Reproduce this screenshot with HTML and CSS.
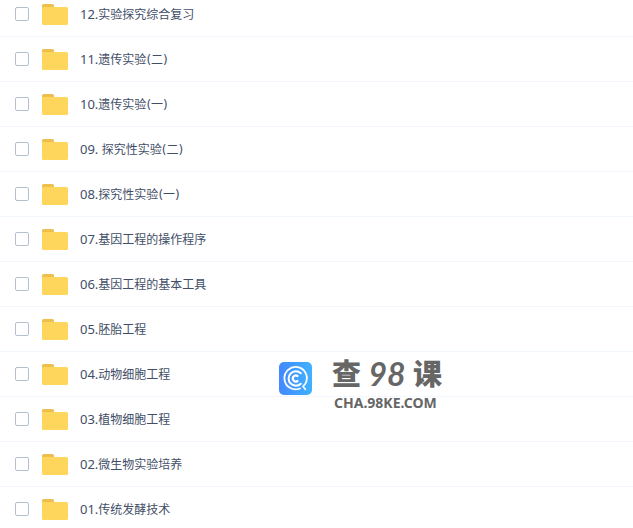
FILE: index.html
```
<!DOCTYPE html>
<html lang="zh-CN">
<head>
  <meta charset="UTF-8">
  <meta name="viewport" content="width=device-width, initial-scale=1.0">
  <title>文件列表</title>
  <link rel="stylesheet" href="styles.css">
</head>
<body>
  <!-- shared folder icon -->
  <svg class="sprite" aria-hidden="true">
    <symbol id="folder" viewBox="0 0 26 21">
      <path fill="#ecbf4e" d="M0 5V1.500Q0 0 1.500 0H10.500Q12 0 12 1.500V5Z"/>
      <path fill="#ffd65c" d="M0 3H24.500Q26 3 26 4.500V19.500Q26 21 24.500 21H1.500Q0 21 0 19.500Z"/>
    </symbol>
  </svg>

  <main class="file-panel">
    <ul class="file-list">
      <li class="file-row">
        <input type="checkbox" id="file12">
        <svg class="folder"><use href="#folder"/></svg>
        <label for="file12"><span class="num">12.</span>实验探究综合复习</label>
      </li>
      <li class="file-row">
        <input type="checkbox" id="file11">
        <svg class="folder"><use href="#folder"/></svg>
        <label for="file11"><span class="num">11.</span>遗传实验<span class="paren">(</span>二<span class="paren">)</span></label>
      </li>
      <li class="file-row">
        <input type="checkbox" id="file10">
        <svg class="folder"><use href="#folder"/></svg>
        <label for="file10"><span class="num">10.</span>遗传实验<span class="paren">(</span>一<span class="paren">)</span></label>
      </li>
      <li class="file-row">
        <input type="checkbox" id="file09">
        <svg class="folder"><use href="#folder"/></svg>
        <label for="file09"><span class="num">09. </span>探究性实验<span class="paren">(</span>二<span class="paren">)</span></label>
      </li>
      <li class="file-row">
        <input type="checkbox" id="file08">
        <svg class="folder"><use href="#folder"/></svg>
        <label for="file08"><span class="num">08.</span>探究性实验<span class="paren">(</span>一<span class="paren">)</span></label>
      </li>
      <li class="file-row">
        <input type="checkbox" id="file07">
        <svg class="folder"><use href="#folder"/></svg>
        <label for="file07"><span class="num">07.</span>基因工程的操作程序</label>
      </li>
      <li class="file-row">
        <input type="checkbox" id="file06">
        <svg class="folder"><use href="#folder"/></svg>
        <label for="file06"><span class="num">06.</span>基因工程的基本工具</label>
      </li>
      <li class="file-row">
        <input type="checkbox" id="file05">
        <svg class="folder"><use href="#folder"/></svg>
        <label for="file05"><span class="num">05.</span>胚胎工程</label>
      </li>
      <li class="file-row">
        <input type="checkbox" id="file04">
        <svg class="folder"><use href="#folder"/></svg>
        <label for="file04"><span class="num">04.</span>动物细胞工程</label>
      </li>
      <li class="file-row">
        <input type="checkbox" id="file03">
        <svg class="folder"><use href="#folder"/></svg>
        <label for="file03"><span class="num">03.</span>植物细胞工程</label>
      </li>
      <li class="file-row">
        <input type="checkbox" id="file02">
        <svg class="folder"><use href="#folder"/></svg>
        <label for="file02"><span class="num">02.</span>微生物实验培养</label>
      </li>
      <li class="file-row">
        <input type="checkbox" id="file01">
        <svg class="folder"><use href="#folder"/></svg>
        <label for="file01"><span class="num">01.</span>传统发酵技术</label>
      </li>
    </ul>

    <div class="watermark">
      <svg class="watermark-logo" viewBox="0 0 33 33" aria-hidden="true">
        <defs>
          <linearGradient id="logoBg" x1="0" y1="0" x2="1" y2="0">
            <stop offset="0" stop-color="#4388ff"/>
            <stop offset="1" stop-color="#3fb2ff"/>
          </linearGradient>
        </defs>
        <rect width="33" height="33" rx="5" fill="url(#logoBg)"/>
        <g fill="none" stroke="#fff" stroke-linecap="round" stroke-linejoin="round">
          <path stroke-width="1.800" d="M21 26.500A11.200 11.200 0 1 1 26.500 21.500L24 24.500L26.300 27.300"/>
          <path stroke-width="2" d="M21.800 11.300A7.200 7.200 0 1 0 21.800 21.700"/>
          <path stroke-width="2.200" d="M18.500 14A3 3 0 1 0 18.500 19"/>
        </g>
      </svg>
      <div class="watermark-text">
        <div class="watermark-name"><span>查</span><em>98</em><span>课</span></div>
        <div class="watermark-url">CHA.98KE.COM</div>
      </div>
    </div>
  </main>
</body>
</html>
```
FILE: styles.css
```
body {
  margin: 0;
  background-color: #fff;
  color: #424e67;
  font-family: "Noto Sans", "Noto Sans CJK SC", sans-serif;
  font-size: 12px;
}
.sprite {
  position: absolute;
  width: 0;
  height: 0;
}
.file-panel {
  position: relative;
  height: 100vh;
  overflow: hidden;
}
/* list is scrolled a little under the top edge */
.file-list {
  list-style: none;
  margin: -8px 0 0;
  padding: 0;
}
.file-row {
  display: flex;
  align-items: center;
  box-sizing: border-box;
  height: 45px;
  padding: 0 15px;
  border-bottom: 1px solid #f2f6fd;
}
.file-row input {
  appearance: none;
  box-sizing: border-box;
  width: 14px;
  height: 14px;
  margin: 0 13px 0 0;
  border: 1px solid #b4c0d0;
  border-radius: 2px;
  background-color: #fff;
}
.file-row input:checked {
  background-color: #4388ff;
}
.folder {
  width: 26px;
  height: 21px;
  margin-right: 12px;
}
.file-row label {
  line-height: 20px;
  white-space: pre;
}
.num {
  font-size: 13px;
}
.paren {
  font-family: "DejaVu Sans", sans-serif;
  font-size: 12px;
}
.watermark {
  position: absolute;
  top: 356px;
  left: 279px;
  display: flex;
  color: #666;
}
.watermark-logo {
  width: 33px;
  height: 33px;
  margin: 6px 20px 0 0;
}
.watermark-name {
  display: flex;
  justify-content: space-between;
  width: 110px;
  height: 38px;
  font-size: 29px;
  font-weight: 900;
  line-height: 36px;
}
.watermark-name em {
  font-family: Lato, sans-serif;
  font-size: 32px;
  font-weight: bold;
}
.watermark-url {
  padding-left: 2px;
  font-family: "Noto Sans", sans-serif;
  font-size: 14px;
  font-weight: bold;
  line-height: 18px;
}
```
